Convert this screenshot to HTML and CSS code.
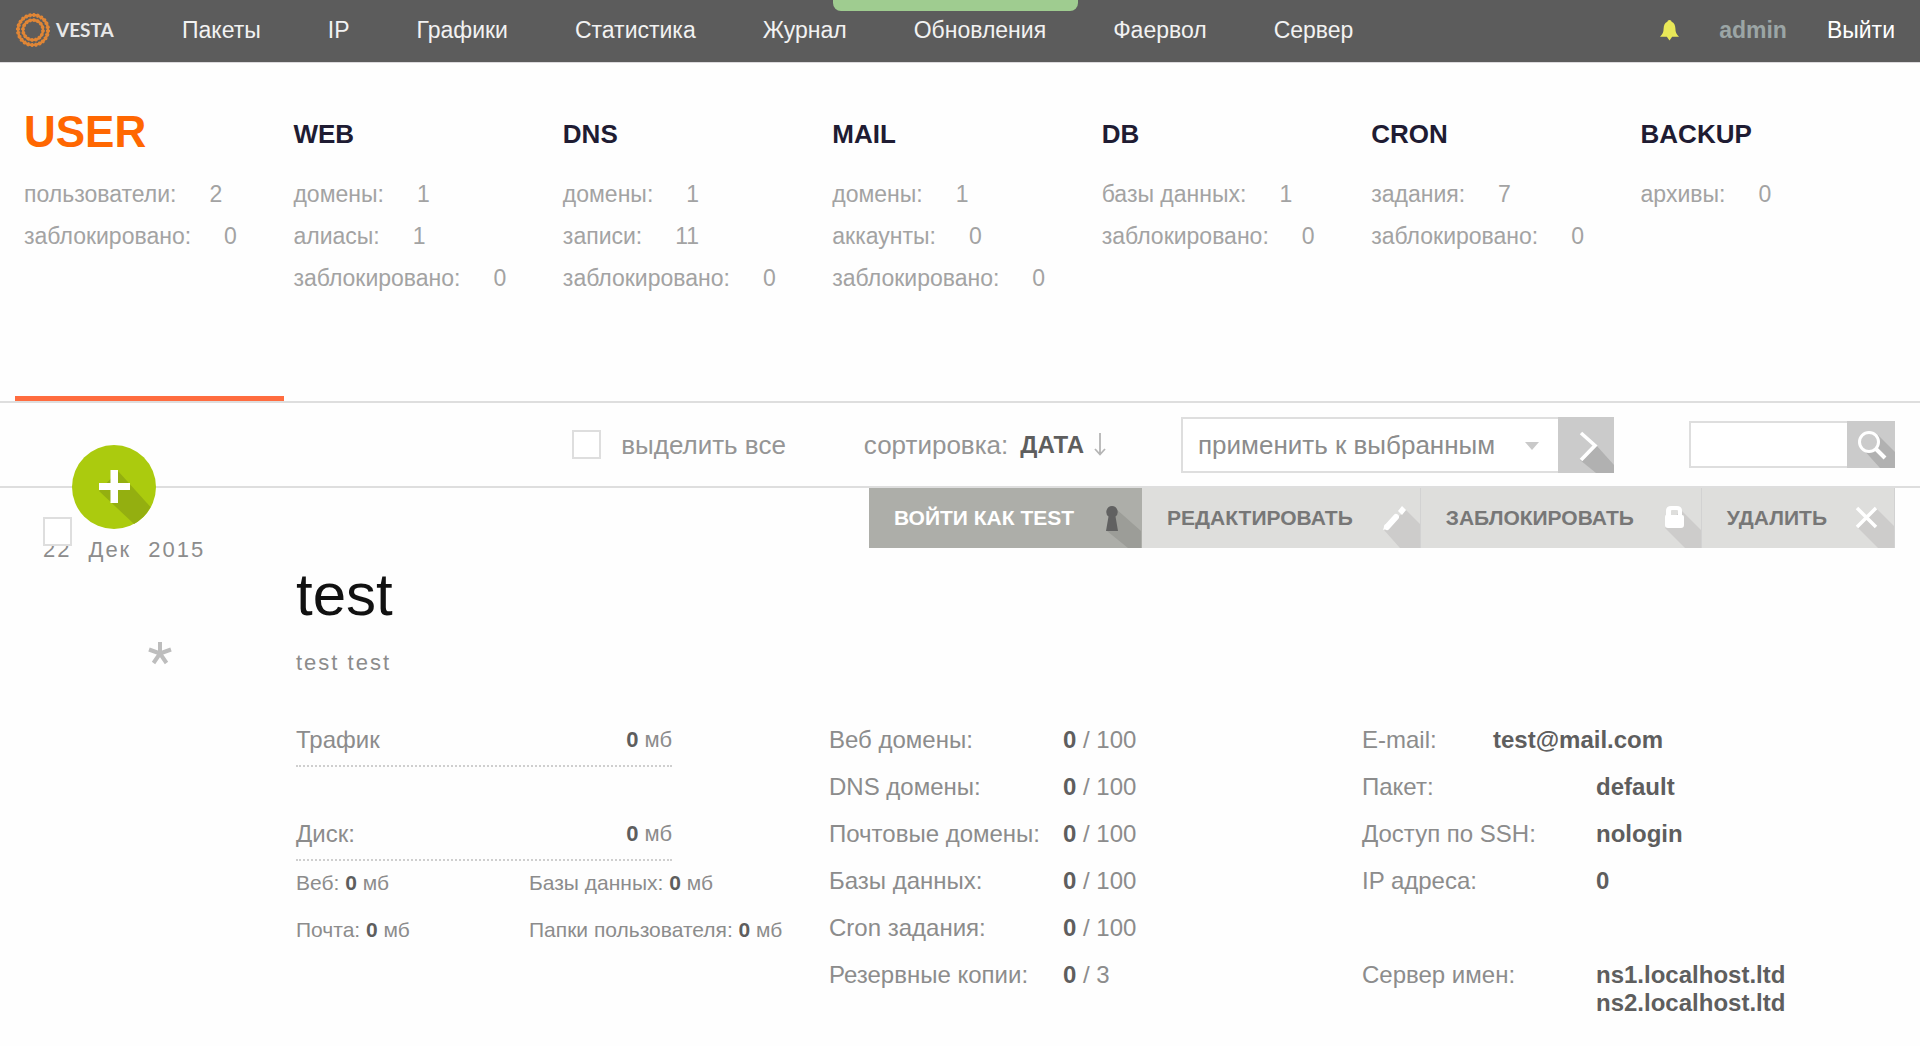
FILE: index.html
```html
<!DOCTYPE html>
<html lang="ru">
<head>
<meta charset="utf-8">
<title>Vesta - USER</title>
<link rel="stylesheet" href="styles.css">
</head>
<body>
<div class="toast" role="status"></div>

<header class="topbar">
  <a class="logo" href="#">
    <svg class="logo-mark" viewBox="0 0 34 34" aria-hidden="true">
      <g fill="none" stroke="#e08636">
        <circle cx="17" cy="17" r="15" stroke-width="2.600"/>
        <circle cx="17" cy="17" r="15" stroke-width="4" stroke-dasharray="2 1.900"/>
        <circle cx="17" cy="17" r="10" stroke-width="2.400"/>
        <circle cx="17" cy="17" r="10" stroke-width="3.600" stroke-dasharray="2 1.900"/>
      </g>
    </svg>
    <span class="logo-text">VESTA</span>
  </a>
  <nav class="menu">
    <a href="#">Пакеты</a>
    <a href="#">IP</a>
    <a href="#">Графики</a>
    <a href="#">Статистика</a>
    <a href="#">Журнал</a>
    <a href="#">Обновления</a>
    <a href="#">Фаервол</a>
    <a href="#">Сервер</a>
  </nav>
  <div class="account">
    <button class="bell" type="button" aria-label="Уведомления">
      <svg viewBox="0 0 20 22" aria-hidden="true"><path fill="#e9e858" d="M10 0c1.300 0 2 .8 2.200 1.800C15 3 16 5.500 16.200 9c.1 4 .9 6 3.800 8.500H12.800L10 21.500 7.200 17.500H0C2.900 15 3.700 13 3.800 9 4 5.500 5 3 7.800 1.800 8 .8 8.700 0 10 0z"/></svg>
    </button>
    <a class="user-name" href="#">admin</a>
    <a class="logout" href="#">Выйти</a>
  </div>
</header>

<nav class="tabs">
  <a class="tab tab-active" href="#">
    <span class="tab-title">USER</span>
    <span class="stat">пользователи:<span class="stat-value">2</span></span>
    <span class="stat">заблокировано:<span class="stat-value">0</span></span>
  </a>
  <a class="tab" href="#">
    <span class="tab-title">WEB</span>
    <span class="stat">домены:<span class="stat-value">1</span></span>
    <span class="stat">алиасы:<span class="stat-value">1</span></span>
    <span class="stat">заблокировано:<span class="stat-value">0</span></span>
  </a>
  <a class="tab" href="#">
    <span class="tab-title">DNS</span>
    <span class="stat">домены:<span class="stat-value">1</span></span>
    <span class="stat">записи:<span class="stat-value">11</span></span>
    <span class="stat">заблокировано:<span class="stat-value">0</span></span>
  </a>
  <a class="tab" href="#">
    <span class="tab-title">MAIL</span>
    <span class="stat">домены:<span class="stat-value">1</span></span>
    <span class="stat">аккаунты:<span class="stat-value">0</span></span>
    <span class="stat">заблокировано:<span class="stat-value">0</span></span>
  </a>
  <a class="tab" href="#">
    <span class="tab-title">DB</span>
    <span class="stat">базы данных:<span class="stat-value">1</span></span>
    <span class="stat">заблокировано:<span class="stat-value">0</span></span>
  </a>
  <a class="tab" href="#">
    <span class="tab-title">CRON</span>
    <span class="stat">задания:<span class="stat-value">7</span></span>
    <span class="stat">заблокировано:<span class="stat-value">0</span></span>
  </a>
  <a class="tab" href="#">
    <span class="tab-title">BACKUP</span>
    <span class="stat">архивы:<span class="stat-value">0</span></span>
  </a>
</nav>

<div class="toolbar">
  <button class="add" type="button" aria-label="Добавить пользователя">
    <svg viewBox="0 0 84 84" aria-hidden="true">
      <circle cx="42" cy="42" r="42" fill="#abcb0e"/>
      <path fill="#94af10" d="M46 26 78.500 62A42 42 0 0 1 62 79L27 46z"/>
      <path fill="#fff" d="M38.500 25h7.500v13h12v7H46v13h-7.500V45H27v-7h11.500z"/>
    </svg>
  </button>
  <label class="select-all"><input class="check" type="checkbox">выделить все</label>
  <div class="sort">сортировка:
    <button class="sort-button" type="button">ДАТА
      <svg viewBox="0 0 12 23" aria-hidden="true"><path d="M6 0v21M1 16l5 5.500 5-5.500" fill="none" stroke="#b5b5b5" stroke-width="1.800"/></svg>
    </button>
  </div>
  <form class="bulk">
    <div class="bulk-field">
      <select class="bulk-select" aria-label="применить к выбранным"><option>применить к выбранным</option></select>
    </div>
    <button class="bulk-go" type="button" aria-label="Применить">
      <svg viewBox="0 0 56 56" aria-hidden="true">
        <path fill="#b1b1b1" d="M38 28 56 48v8H38L22 43z"/>
        <path d="M23 16l14 12.500L23 43" fill="none" stroke="#fff" stroke-width="3.600"/>
      </svg>
    </button>
  </form>
  <form class="search">
    <input class="search-input" type="text" aria-label="Поиск">
    <button class="search-go" type="button" aria-label="Найти">
      <svg viewBox="0 0 48 47" aria-hidden="true">
        <path fill="#b1b1b1" d="M31 14 48 31v16H33L15 27l10 1z"/>
        <circle cx="22" cy="21" r="9.500" fill="#cbcbcb" stroke="#fff" stroke-width="3"/>
        <path d="M28 27l10 10" stroke="#fff" stroke-width="4"/>
      </svg>
    </button>
  </form>
</div>

<main class="unit">
  <div class="unit-side">
    <input class="check unit-check" type="checkbox" aria-label="Выбрать test">
    <div class="date"><span>22</span><span>Дек</span><span>2015</span></div>
    <button class="star" type="button" aria-label="В избранное">
      <svg viewBox="0 0 24 24" aria-hidden="true"><path d="M12 12.500V1M12 12.500 1 8.500M12 12.500l11-4M12 12.500 5.500 22M12 12.500l6.500 9.500" fill="none" stroke="#bdbdbd" stroke-width="4"/></svg>
    </button>
  </div>
  <div class="unit-main">
    <div class="actions">
      <a class="action action-login" href="#">ВОЙТИ КАК TEST
        <svg viewBox="0 0 50 60" aria-hidden="true"><path fill="#9c9d98" d="M24 20 50 43v17H37L16 43z"/><path fill="#616161" d="M21 18a6 6 0 0 1 3.500 10.600L27 43H15l2.500-14.400A6 6 0 0 1 21 18z"/></svg>
      </a>
      <a class="action" href="#">РЕДАКТИРОВАТЬ
        <svg viewBox="0 0 50 60" aria-hidden="true"><path fill="#cdcccb" d="M36 22 50 36v24H30L14 42z"/><path d="M17 39l9-10" fill="none" stroke="#fff" stroke-width="6" stroke-linecap="round"/><path fill="#fff" d="M13 42l2-6 4 4zM32 18l4 4-4 5-4-4z"/></svg>
      </a>
      <a class="action" href="#">ЗАБЛОКИРОВАТЬ
        <svg viewBox="0 0 50 60" aria-hidden="true"><path fill="#cdcccb" d="M30 22 50 42v18H34L14 40z"/><path fill="#fff" fill-rule="evenodd" d="M15 27v-4q0-5 5-5h6q5 0 5 5v4q2 0 2 2v8q0 3-3 3H17q-3 0-3-3v-8q0-2 1-2zM20 27h7v-4q0-1-1-1h-5q-1 0-1 1z"/></svg>
      </a>
      <a class="action" href="#">УДАЛИТЬ
        <svg viewBox="0 0 50 60" aria-hidden="true"><path fill="#cdcccb" d="M32 20 50 38v22H34L14 40z"/><path d="M13 20l19 19M32 20 13 39" stroke="#fff" stroke-width="3.500"/></svg>
      </a>
    </div>
    <h1 class="name">test</h1>
    <p class="full-name">test test</p>
    <div class="details">
      <section class="usage">
        <div class="usage-row usage-traffic">Трафик<span class="amount"><b>0</b> мб</span></div>
        <div class="usage-row">Диск:<span class="amount"><b>0</b> мб</span></div>
        <div class="usage-parts">
          <span>Веб: <b>0</b> мб</span>
          <span>Базы данных: <b>0</b> мб</span>
          <span>Почта: <b>0</b> мб</span>
          <span>Папки пользователя: <b>0</b> мб</span>
        </div>
      </section>
      <dl class="facts">
        <div class="fact"><dt>Веб домены:</dt><dd><b>0</b> / 100</dd></div>
        <div class="fact"><dt>DNS домены:</dt><dd><b>0</b> / 100</dd></div>
        <div class="fact"><dt>Почтовые домены:</dt><dd><b>0</b> / 100</dd></div>
        <div class="fact"><dt>Базы данных:</dt><dd><b>0</b> / 100</dd></div>
        <div class="fact"><dt>Cron задания:</dt><dd><b>0</b> / 100</dd></div>
        <div class="fact"><dt>Резервные копии:</dt><dd><b>0</b> / 3</dd></div>
      </dl>
      <dl class="facts">
        <div class="fact fact-email"><dt>E-mail:</dt><dd><b>test@mail.com</b></dd></div>
        <div class="fact"><dt>Пакет:</dt><dd><b>default</b></dd></div>
        <div class="fact"><dt>Доступ по SSH:</dt><dd><b>nologin</b></dd></div>
        <div class="fact fact-ip"><dt>IP адреса:</dt><dd><b>0</b></dd></div>
        <div class="fact"><dt>Сервер имен:</dt><dd><b>ns1.localhost.ltd<br>ns2.localhost.ltd</b></dd></div>
      </dl>
    </div>
  </div>
</main>
</body>
</html>
```
FILE: styles.css
```css
* {
  box-sizing: border-box;
}

body {
  margin: 0;
  background: #fefefe;
  color: #8c8c8c;
  font: 24px/28px "Liberation Sans", Arial, sans-serif;
}

a {
  color: inherit;
  text-decoration: none;
}

button {
  padding: 0;
  border: 0;
  background: none;
  color: inherit;
  font: inherit;
  cursor: pointer;
}

svg {
  display: block;
}

b {
  color: #5e5e5e;
}

/* Top bar */

.toast {
  position: absolute;
  top: 0;
  left: 50%;
  width: 245px;
  height: 11px;
  margin-left: -127px;
  border-radius: 0 0 8px 8px;
  background: #9fcc90;
}

.topbar {
  display: flex;
  align-items: center;
  height: 63px;
  padding: 0 25px 2px 16px;
  border-bottom: 1px solid #dcdadd;
  background: #5c5c5c;
  color: #f2f2f2;
  font-size: 23px;
}

.logo {
  display: flex;
  align-items: center;
  gap: 6px;
  width: 166px;
}

.logo-mark {
  width: 34px;
  height: 34px;
}

.logo-text {
  color: #e8e8e8;
  font: bold 19px/28px Lato, "Liberation Sans", sans-serif;
}

.menu {
  display: flex;
  gap: 67px;
}

.account {
  display: flex;
  align-items: center;
  gap: 40px;
  margin-left: auto;
}

.bell svg {
  width: 19px;
  height: 21px;
}

.user-name {
  color: #9ba5a5;
  font-weight: bold;
}

.logout {
  color: #fff;
}

/* Section tabs */

.tabs {
  display: grid;
  grid-template-columns: repeat(7, 1fr);
  padding: 0 19px 0 15px;
  border-bottom: 2px solid #dedede;
}

.tab {
  display: flex;
  flex-direction: column;
  padding: 44px 0 97px 9px;
  border-bottom: 5px solid transparent;
  color: #a3a3a3;
  font-size: 23px;
  line-height: 42px;
}

.tab-title {
  margin-bottom: 12px;
  color: #1f1c33;
  font-size: 26px;
  font-weight: bold;
  line-height: 54px;
}

.tab-active {
  border-bottom-color: #ff6c3f;
}

.tab-active .tab-title {
  margin-bottom: 16px;
  color: #ff6701;
  font-size: 44px;
  line-height: 50px;
}

.stat-value {
  margin-left: 33px;
}

/* Toolbar */

.toolbar {
  position: relative;
  display: flex;
  align-items: center;
  justify-content: flex-end;
  gap: 75px;
  height: 85px;
  padding-right: 25px;
  border-bottom: 2px solid #dedede;
  color: #959595;
  font-size: 26px;
}

.add {
  position: absolute;
  top: 42px;
  left: 72px;
}

.add svg {
  width: 84px;
  height: 84px;
}

.check {
  appearance: none;
  width: 29px;
  height: 29px;
  margin: 0;
  border: 2px solid #dedede;
  background: #fff;
}

.select-all {
  display: flex;
  align-items: center;
  gap: 20px;
  margin-right: 3px;
}

.sort {
  display: flex;
  align-items: center;
  gap: 12px;
}

.sort-button {
  display: flex;
  align-items: center;
  gap: 10px;
  color: #5e5e5e;
  font-size: 24px;
  font-weight: bold;
}

.sort-button svg {
  width: 12px;
  height: 23px;
}

.bulk,
.search {
  display: flex;
}

.bulk-field {
  position: relative;
}

.bulk-field::after {
  content: "";
  position: absolute;
  top: 25px;
  right: 19px;
  border: 7px solid transparent;
  border-top: 8px solid #c9c9c9;
  border-bottom: 0;
  pointer-events: none;
}

.bulk-select {
  appearance: none;
  width: 377px;
  height: 56px;
  padding: 0 15px;
  border: 2px solid #dedede;
  border-right: 0;
  border-radius: 0;
  background: #fff;
  color: #8c8c8c;
  font: inherit;
}

.bulk-go,
.search-go {
  background: #cbcbcb;
}

.bulk-go svg {
  width: 56px;
  height: 56px;
}

.search-input {
  width: 158px;
  height: 47px;
  padding: 0 8px;
  border: 2px solid #dedede;
  border-right: 0;
  border-radius: 0;
  background: #fff;
  font: inherit;
}

.search-go svg {
  width: 48px;
  height: 47px;
}

/* User record */

.unit {
  display: grid;
  grid-template-columns: 296px 1fr;
  padding-right: 25px;
}

.unit-side {
  position: relative;
  padding: 48px 0 0 43px;
}

.unit-check {
  position: absolute;
  top: 29px;
  left: 43px;
}

.date {
  display: flex;
  gap: 17px;
  font-size: 22px;
  letter-spacing: 2px;
}

.star {
  margin: 77px 0 0 105px;
}

.star svg {
  width: 24px;
  height: 24px;
}

.actions {
  display: flex;
  justify-content: flex-end;
}

.action {
  display: flex;
  align-items: center;
  gap: 17px;
  height: 60px;
  padding-left: 25px;
  border-right: 1px solid #d2d2d2;
  background: #dededc;
  color: #777;
  font-size: 21px;
  font-weight: bold;
}

.action svg {
  width: 50px;
  height: 60px;
}

.action-login {
  border-right-color: #adaea9;
  background: #adaea9;
  color: #fff;
}

.name {
  margin: 13px 0 20px;
  color: #111;
  font-size: 60px;
  font-weight: normal;
  line-height: 68px;
}

.full-name {
  margin: 0 0 49px;
  font-size: 22px;
  letter-spacing: 2px;
}

.details {
  display: grid;
  grid-template-columns: repeat(3, 1fr);
}

.usage-row {
  display: flex;
  justify-content: space-between;
  width: 376px;
  margin-bottom: 8px;
  padding-bottom: 11px;
  border-bottom: 2px dotted #cfcfcf;
}

.usage-traffic {
  margin-bottom: 53px;
}

.amount {
  font-size: 22px;
}

.usage-parts {
  display: grid;
  grid-template-columns: 233px auto;
  row-gap: 19px;
  font-size: 21px;
  white-space: nowrap;
}

.facts {
  display: flex;
  flex-direction: column;
  gap: 19px;
  margin: 0;
}

.fact {
  display: grid;
  grid-template-columns: 234px auto;
}

.fact-email {
  grid-template-columns: 131px auto;
}

.fact-ip {
  margin-bottom: 47px;
}

.fact dd {
  margin: 0;
}
```
